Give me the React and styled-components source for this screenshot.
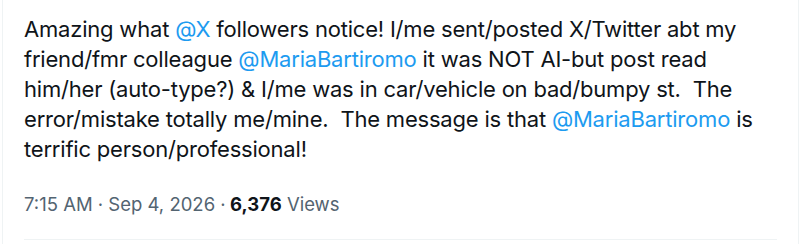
import React from "react";
import styled, { createGlobalStyle } from "styled-components";

const Global = createGlobalStyle`
  html, body { margin: 0; padding: 0; background: #ffffff; }
  body { font-family: Inter, "Noto Sans", sans-serif; }
`;

const Card = styled.article`
  width: 797px;
  height: 244px;
  margin-left: 2px;
  border-left: 1px solid #eff3f4;
  border-right: 1px solid #eff3f4;
  box-sizing: border-box;
  padding: 14px 21px 0 21px;
  background: #fff;
`;

const Body = styled.div`
  font-family: Inter, "Noto Sans", sans-serif;
  font-size: 22px;
  line-height: 30px;
  color: #0f1419;
  white-space: pre;
  letter-spacing: -0.2px;
`;

const Mention = styled.span`
  color: #1d9bf0;
`;

const Meta = styled.div`
  display: flex;
  align-items: center;
  padding: 29px 0 24px;
  line-height: 22px;
  font-size: 18.5px;
  color: #536471;
  border-bottom: 1px solid #eff3f4;
`;

const Strong = styled.span`
  font-weight: 700;
  color: #0f1419;
`;

export default function App() {
  return (
    <>
      <Global />
      <Card>
        <Body>
          Amazing what <Mention>@X</Mention> followers notice! I/me sent/posted X/Twitter abt my{"\n"}
          friend/fmr colleague <Mention>@MariaBartiromo</Mention> it was NOT AI-but post read{"\n"}
          him/her (auto-type?) &amp; I/me was in car/vehicle on bad/bumpy st.  The{"\n"}
          error/mistake totally me/mine.  The message is that <Mention>@MariaBartiromo</Mention> is{"\n"}
          terrific person/professional!
        </Body>
        <Meta>
          <span>7:15 AM · Sep 4, 2026 · </span>
          <Strong>&nbsp;6,376</Strong>
          <span>&nbsp;Views</span>
        </Meta>
      </Card>
    </>
  );
}
